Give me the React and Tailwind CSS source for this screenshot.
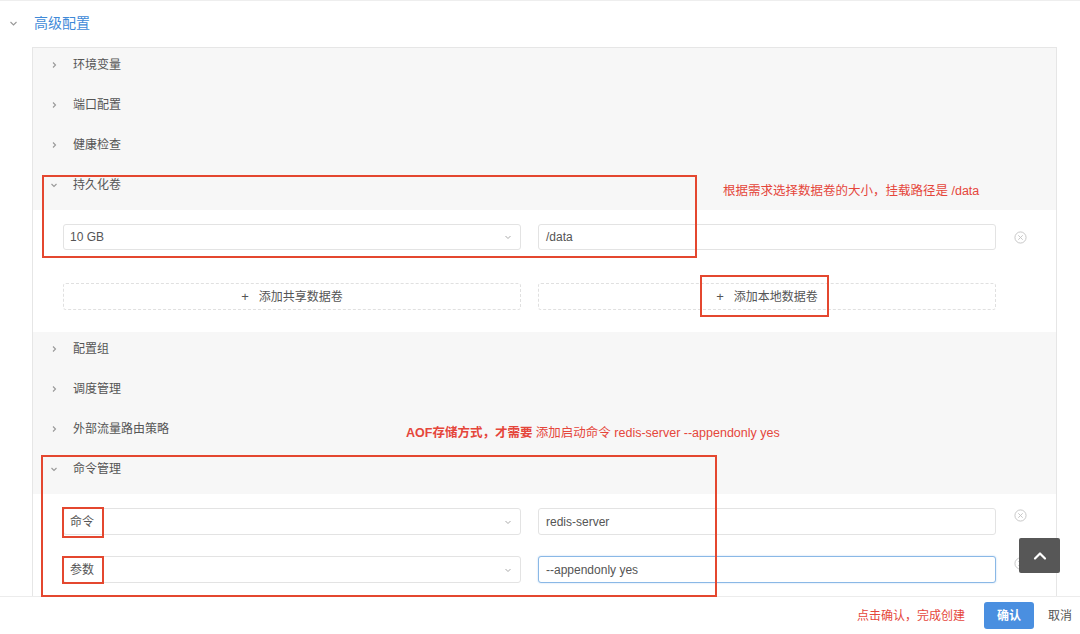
import { useState } from "react";

const font = "font-['Liberation_Sans','Noto_Sans_CJK_SC',sans-serif]";

function Chevron({ open }) {
  return (
    <svg width="10" height="10" viewBox="0 0 10 10" className="shrink-0">
      {open ? (
        <path d="M2.5 4 L5 6.5 L7.5 4" fill="none" stroke="#999" strokeWidth="1.1" />
      ) : (
        <path d="M4 2.5 L6.5 5 L4 7.5" fill="none" stroke="#999" strokeWidth="1.1" />
      )}
    </svg>
  );
}

function CloseCircle() {
  return (
    <svg width="13" height="13" viewBox="0 0 14 14">
      <circle cx="7" cy="7" r="6" fill="none" stroke="#c4c4c4" strokeWidth="1" />
      <path d="M4.6 4.6 L9.4 9.4 M9.4 4.6 L4.6 9.4" stroke="#c4c4c4" strokeWidth="1" />
    </svg>
  );
}

function Row({ title, open, children }) {
  return (
    <div className={open ? "h-[42px] pt-[8px] pl-[16px] flex items-start" : "h-10 pt-[8px] pl-[16px] flex items-start"}>
      <div className="h-[18px] flex items-center gap-[14px]">
        <Chevron open={open} />
        <span className="text-[12px] leading-[18px] text-[#555]">{title}</span>
      </div>
      {children}
    </div>
  );
}

function Select({ value, placeholder, h = "h-[26px]" }) {
  return (
    <div className={`${h} w-[458px] bg-white border border-[#e3e3e3] rounded-[3px] flex items-center justify-between pl-[6px] pr-[7px]`}>
      <span className="text-[12px] text-[#555]">{value || placeholder}</span>
      <svg width="10" height="10" viewBox="0 0 10 10">
        <path d="M2.5 4 L5 6.5 L7.5 4" fill="none" stroke="#aaa" strokeWidth="1" />
      </svg>
    </div>
  );
}

function Input({ value, focused, h = "h-[26px]" }) {
  return (
    <div
      className={
        focused
          ? `${h} w-[458px] bg-white border border-[#8ab8e6] shadow-[0_0_2px_#b9d6f2] rounded-[3px] flex items-center pl-[7px]`
          : `${h} w-[458px] bg-white border border-[#e3e3e3] rounded-[3px] flex items-center pl-[7px]`
      }
    >
      <span className="text-[12px] text-[#555]">{value}</span>
    </div>
  );
}

function AddBox({ label }) {
  return (
    <div className="h-[27px] w-[458px] bg-white border border-dashed border-[#e0e0e0] rounded-[3px] flex items-center justify-center gap-[10px] text-[12px] text-[#555]">
      <span className="text-[13px]">+</span>
      <span>{label}</span>
    </div>
  );
}

export default function App() {
  const [cmd] = useState({ command: "redis-server", args: "--appendonly yes" });

  return (
    <div className={`${font} relative w-[1080px] h-[634px] flex flex-col bg-white overflow-hidden`}>
      <div className="flex-1 overflow-hidden border-t border-[#eeeeee]">
        <div className="h-[46px] flex items-start pt-[13px] pl-[8px] gap-[15px]">
          <svg width="11" height="18" viewBox="0 0 11 18">
            <path d="M2.5 8 L5.5 11 L8.5 8" fill="none" stroke="#999" strokeWidth="1.1" />
          </svg>
          <span className="text-[14px] leading-[18px] text-[#3f8ad8]">高级配置</span>
        </div>

        <div className="ml-[32px] w-[1025px] bg-[#f7f7f7] border border-[#e6e6e6]">
          <Row title="环境变量" />
          <Row title="端口配置" />
          <Row title="健康检查" />
          <Row title="持久化卷" open />
          <div className="bg-white pl-[30px] pt-[14px] pb-[22px]">
            <div className="flex items-center gap-[17px]">
              <Select value="10 GB" />
              <Input value="/data" />
              <div className="ml-[1px]">
                <CloseCircle />
              </div>
            </div>
            <div className="flex items-center gap-[17px] mt-[33px]">
              <AddBox label="添加共享数据卷" />
              <AddBox label="添加本地数据卷" />
            </div>
          </div>
          <Row title="配置组" />
          <Row title="调度管理" />
          <Row title="外部流量路由策略" />
          <Row title="命令管理" open />
          <div className="bg-white pl-[30px] pt-[14px] pb-[22px]">
            <div className="flex items-start gap-[17px]">
              <Select placeholder="命令" h="h-[27px]" />
              <Input value={cmd.command} h="h-[27px]" />
              <div className="ml-[1px] mt-[1px]">
                <CloseCircle />
              </div>
            </div>
            <div className="flex items-start gap-[17px] mt-[21px]">
              <Select placeholder="参数" h="h-[27px]" />
              <Input value={cmd.args} focused h="h-[27px]" />
              <div className="ml-[1px] mt-[1px]">
                <CloseCircle />
              </div>
            </div>
          </div>
        </div>
      </div>

      <div className="h-[38px] shrink-0 bg-white border-t border-[#ececec] flex items-center justify-end pr-[8px]">
        <span className="text-[12px] text-[#e5463b] mr-[19px]">点击确认，完成创建</span>
        <button className="h-[27px] w-[50px] rounded-[3px] bg-[#4a8fe0] text-white text-[12px] font-bold mr-[14px]">确认</button>
        <span className="text-[12px] text-[#555]">取消</span>
      </div>

      {/* annotations */}
      <span className="absolute left-[723px] top-[183px] text-[12.5px] leading-[16px] text-[#e5463b]">
        根据需求选择数据卷的大小，挂载路径是 /data
      </span>
      <span className="absolute left-[406px] top-[425px] text-[12.5px] leading-[16px] text-[#e5463b]">
        <b>AOF存储方式，才需要</b> 添加启动命令 redis-server --appendonly yes
      </span>
      <div className="absolute left-[42px] top-[175px] w-[655px] h-[83px] border-2 border-[#e4472f]" />
      <div className="absolute left-[700px] top-[275px] w-[129px] h-[42px] border-2 border-[#e4472f]" />
      <div className="absolute left-[41px] top-[455px] w-[676px] h-[142px] border-2 border-[#e4472f]" />
      <div className="absolute left-[62px] top-[507px] w-[42px] h-[31px] border-2 border-[#e4472f]" />
      <div className="absolute left-[62px] top-[556px] w-[42px] h-[28px] border-2 border-[#e4472f]" />

      <div className="absolute left-[1019px] top-[538px] w-[41px] h-[35px] rounded-[2px] bg-[#575757] flex items-center justify-center">
        <svg width="16" height="12" viewBox="0 0 16 12">
          <path d="M3 8.5 L8 3.5 L13 8.5" fill="none" stroke="#fff" strokeWidth="2.2" strokeLinecap="round" strokeLinejoin="round" />
        </svg>
      </div>
    </div>
  );
}
